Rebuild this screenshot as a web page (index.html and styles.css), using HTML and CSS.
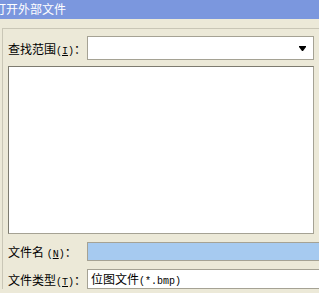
FILE: index.html
```html
<!DOCTYPE html>
<html lang="zh-CN">
<head>
    <meta charset="UTF-8">
    <title>打开外部文件</title>
    <link rel="stylesheet" href="styles.css">
</head>
<body>
<div class="titlebar">打开外部文件</div>
<div class="panel">
    <div class="row lookin">
        <span class="label">查找范围<span class="ascii">(<u>I</u>)</span>：</span>
        <div class="combo">
            <svg class="arrow" width="7" height="5" viewBox="0 0 7 5"><path d="M0 0h7v1l-3 4h-1l-3-4z" fill="#000"/></svg>
        </div>
    </div>
    <div class="listbox"></div>
    <div class="row filename">
        <span class="label">文件名 <span class="ascii">(<u>N</u>)</span>：</span>
        <div class="field selected"></div>
    </div>
    <div class="row filetype">
        <span class="label">文件类型<span class="ascii">(<u>T</u>)</span>：</span>
        <div class="field">位图文件<span class="ascii">(*.bmp)</span></div>
    </div>
</div>
</body>
</html>
```

FILE: styles.css
```css
body {
    margin: 0;
    width: 319px;
    height: 293px;
    overflow: hidden;
    background: #ece9d8;
    font-family: "Noto Sans CJK SC", "Liberation Sans", sans-serif;
    font-size: 12px;
    color: #000;
}
.titlebar {
    height: 19px;
    line-height: 18px;
    background: #7b97de;
    color: #fff;
    font-size: 12px;
    text-indent: -6px;
    white-space: nowrap;
    overflow: hidden;
}
.panel {
    margin: 9px 0 0 2px;
    border-top: 1px solid #c9c6b6;
    border-left: 1px solid #c9c6b6;
    padding: 7px 0 0 5px;
}
.row {
    display: flex;
    align-items: center;
}
.label {
    width: 79px;
    flex: none;
    white-space: nowrap;
}
.ascii {
    font-family: "Liberation Mono", monospace;
    font-size: 10px;
}
.label u {
    text-decoration: underline;
    text-underline-offset: 1px;
}
.combo {
    width: 227px;
    height: 24px;
    box-sizing: border-box;
    background: #fff;
    border: 1px solid #a5a294;
    display: flex;
    align-items: center;
    justify-content: flex-end;
    padding-right: 7px;
}
.combo .arrow {
    display: block;
}
.listbox {
    margin-top: 6px;
    width: 304px;
    height: 166px;
    background: #fff;
    border: 1px solid #a5a294;
    border-top-color: #7d7b70;
    border-left-color: #7d7b70;
}
.filename {
    margin-top: 8px;
}
.filetype {
    margin-top: 8px;
}
.field {
    width: 240px;
    flex: none;
    height: 17px;
    border: 1px solid #a5a294;
    background: #fff;
    line-height: 17px;
    padding-left: 3px;
    white-space: nowrap;
}
.field.selected {
    background: #a6caf0;
}
.filetype .field {
    height: 18px;
    line-height: 18px;
}
```
